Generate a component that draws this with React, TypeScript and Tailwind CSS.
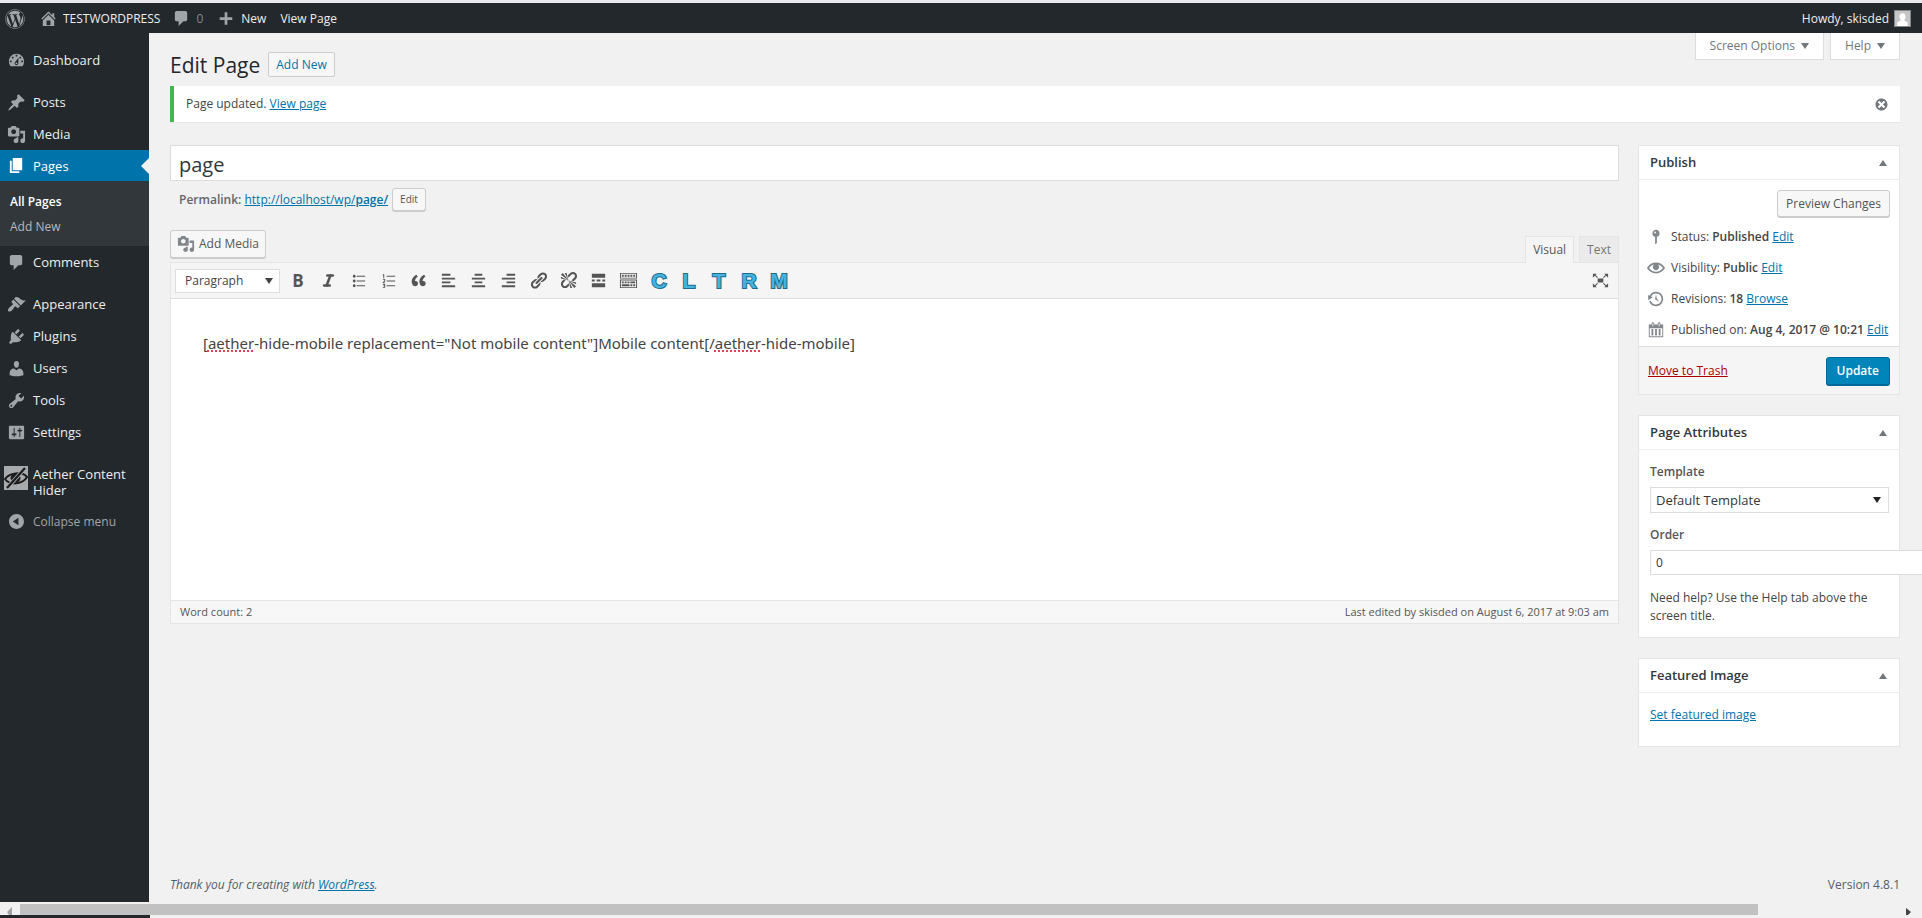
import React from 'react';
import { FaWordpress } from 'react-icons/fa';
import { Italic } from 'lucide-react';

const ICONS = {
  dashboard: 'M3.76 16h12.48c1.1-1.37 1.76-3.11 1.76-5 0-4.42-3.58-8-8-8s-8 3.58-8 8c0 1.89.66 3.63 1.76 5zM10 4c.55 0 1 .45 1 1s-.45 1-1 1-1-.45-1-1 .45-1 1-1zM6 6c.55 0 1 .45 1 1s-.45 1-1 1-1-.45-1-1 .45-1 1-1zm8 0c.55 0 1 .45 1 1s-.45 1-1 1-1-.45-1-1 .45-1 1-1zm-5.37 5.55L12 7v6c0 1.1-.9 2-2 2s-2-.9-2-2c0-.57.24-1.08.63-1.45zM4 10c.55 0 1 .45 1 1s-.45 1-1 1-1-.45-1-1 .45-1 1-1zm12 0c.55 0 1 .45 1 1s-.45 1-1 1-1-.45-1-1 .45-1 1-1zm-5 3c0-.55-.45-1-1-1s-1 .45-1 1 .45 1 1 1 1-.45 1-1z',
  pin: 'M10.44 3.02l1.82-1.82 6.36 6.35-1.83 1.82c-1.05-.68-2.48-.57-3.41.36l-.75.75c-.92.93-1.04 2.35-.35 3.41l-1.83 1.82-2.41-2.41-2.8 2.79c-.42.42-3.38 2.71-3.8 2.29s1.86-3.39 2.28-3.81l2.79-2.79L4.1 9.36l1.83-1.82c1.05.69 2.48.57 3.4-.36l.75-.75c.93-.92 1.05-2.35.36-3.41z',
  media: 'M13 11V4c0-.55-.45-1-1-1h-1.67L9 1H5L3.67 3H2c-.55 0-1 .45-1 1v7c0 .55.45 1 1 1h10c.55 0 1-.45 1-1zM7 4.5c1.38 0 2.5 1.12 2.5 2.5S8.38 9.5 7 9.5 4.5 8.38 4.5 7 5.62 4.5 7 4.5zM14 6h5v10.5c0 1.38-1.12 2.5-2.5 2.5S14 17.88 14 16.5s1.12-2.5 2.5-2.5c.17 0 .34.02.5.05V9h-3V6zm-4 8.05V13h2v3.5c0 1.38-1.12 2.5-2.5 2.5S7 17.88 7 16.5 8.12 14 9.5 14c.17 0 .34.02.5.05z',
  page: 'M6 15V2h10v13H6zm-1 1h8v2H3V5h2v11z',
  comment: 'M5 2h9c1.1 0 2 .9 2 2v7c0 1.1-.9 2-2 2h-2l-5 5v-5H5c-1.1 0-2-.9-2-2V4c0-1.1.9-2 2-2z',
  appearance: 'M14.48 11.06L7.41 3.99l1.5-1.5c.5-.56 2.3-.47 3.51.32 1.21.8 1.43 1.28 2.91 2.1 1.18.64 2.45 1.26 4.45.85zm-.71.71L6.7 4.7 4.93 6.47c-.39.39-.39 1.02 0 1.41l1.06 1.06c.39.39.39 1.03 0 1.42-.6.6-1.43 1.11-2.21 1.69-.35.26-.7.53-1.01.84C1.43 14.23.4 16.08 1.4 17.07c.99 1 2.84-.03 4.18-1.36.31-.31.58-.66.85-1.02.57-.78 1.08-1.61 1.69-2.21.39-.39 1.02-.39 1.41 0l1.06 1.06c.39.39 1.02.39 1.41 0z',
  plugins: 'M13.11 4.36L9.87 7.6 8 5.73l3.24-3.24c.35-.34 1.05-.2 1.56.32.52.51.66 1.21.31 1.55zm-8 1.77l.91-1.12 9.01 9.01-1.19.84c-.71.71-2.63 1.16-3.82 1.16H6.14L4.9 17.26c-.59.59-1.54.59-2.12 0-.59-.58-.59-1.53 0-2.12l1.24-1.24v-3.88c0-1.13.4-3.19 1.09-3.89zm7.26 3.97l3.24-3.24c.34-.35 1.04-.21 1.55.31.52.51.66 1.21.31 1.55l-3.24 3.25z',
  users: 'M10 9.25c-2.27 0-2.73-3.44-2.73-3.44C7 4.02 7.82 2 9.97 2c2.16 0 2.98 2.02 2.71 3.81 0 0-.41 3.44-2.68 3.44zm0 2.57L12.72 10c2.39 0 4.52 2.33 4.52 4.53v2.49s-3.65 1.13-7.24 1.13c-3.65 0-7.24-1.13-7.24-1.13v-2.49c0-2.25 1.94-4.48 4.47-4.48z',
  tools: 'M16.68 9.77c-1.34 1.34-3.3 1.67-4.95.99l-5.41 6.52c-.99.99-2.59.99-3.58 0s-.99-2.59 0-3.57l6.52-5.42c-.68-1.65-.35-3.61.99-4.95 1.28-1.28 3.12-1.62 4.72-1.06l-2.89 2.89 2.82 2.82 2.86-2.87c.53 1.58.18 3.39-1.08 4.65zM3.81 16.21c.4.39 1.04.39 1.43 0 .4-.4.4-1.04 0-1.43-.39-.4-1.03-.4-1.43 0-.39.39-.39 1.03 0 1.43z',
  settings: 'M18 16V4c0-.55-.45-1-1-1H3c-.55 0-1 .45-1 1v12c0 .55.45 1 1 1h14c.55 0 1-.45 1-1zM8 11h1c.55 0 1 .45 1 1s-.45 1-1 1H8v1.5c0 .28-.22.5-.5.5s-.5-.22-.5-.5V13H6c-.55 0-1-.45-1-1s.45-1 1-1h1V5.5c0-.28.22-.5.5-.5s.5.22.5.5V11zm5-2h-1c-.55 0-1-.45-1-1s.45-1 1-1h1V5.5c0-.28.22-.5.5-.5s.5.22.5.5V7h1c.55 0 1 .45 1 1s-.45 1-1 1h-1v5.5c0 .28-.22.5-.5.5s-.5-.22-.5-.5V9z',
  collapse: 'M10 2.16c4.33 0 7.84 3.51 7.84 7.84s-3.51 7.84-7.84 7.84S2.16 14.33 2.16 10 5.71 2.16 10 2.16zm2 11.72V6.12L6.18 9.97z',
  home: 'M16 8.5l1.53 1.53-1.06 1.06L10 4.6l-6.47 6.49-1.06-1.06L10 2.5l4 4v-2h2v4zm-6-2.46l6 5.99V18H4v-5.97zM12 17v-5H8v5h4z',
  plus: 'M17 8v3h-5.500v5.500h-3V11H3V8h5.500V2.500h3V8H17z',
  dismiss: 'M10 2c4.42 0 8 3.58 8 8s-3.58 8-8 8-8-3.58-8-8 3.58-8 8-8zm5 11l-3-3 3-3-2-2-3 3-3-3-2 2 3 3-3 3 2 2 3-3 3 3 2-2z',
  status: 'M14 6c0 1.86-1.28 3.41-3 3.86V16c0 1-2 2-2 2V9.86c-1.72-.45-3-2-3-3.86 0-2.21 1.79-4 4-4s4 1.79 4 4zM8 5c0 .55.45 1 1 1s1-.45 1-1-.45-1-1-1-1 .45-1 1z',
  visibility: 'M19.7 9.4C17.7 6 14 3.9 10 3.9S2.3 6 .3 9.4L0 10l.3.6c2 3.4 5.7 5.5 9.7 5.5s7.7-2.1 9.7-5.5l.3-.6-.3-.6zM10 14.1c-3.1 0-6-1.6-7.7-4.1C3.6 8 5.7 6.6 8 6.1c-.9.6-1.5 1.7-1.5 2.9 0 1.9 1.6 3.5 3.5 3.5s3.5-1.6 3.5-3.5c0-1.2-.6-2.3-1.5-2.9 2.3.5 4.4 1.9 5.7 3.9-1.7 2.5-4.6 4.1-7.7 4.1z',
  backup: 'M13.65 2.88c3.93 2.01 5.48 6.84 3.47 10.77s-6.83 5.48-10.77 3.47c-1.87-.96-3.2-2.56-3.86-4.4l1.64-1.03c.45 1.57 1.52 2.95 3.08 3.76 3.01 1.54 6.69.35 8.23-2.66 1.55-3.01.36-6.69-2.65-8.24C9.78 3.01 6.1 4.2 4.56 7.21l1.88.97-4.95 3.08-.39-5.82 1.78.91C4.9 2.4 9.75.89 13.65 2.88zm-4.36 7.83C9.11 10.53 9 10.28 9 10c0-.07.03-.12.04-.19h-.01L10 5l.97 4.81L14 13l-4.5-2.12.02-.02c-.08-.04-.16-.09-.23-.15z',
  calendar: 'M15 4h3v14H2V4h3V3c0-.83.67-1.5 1.5-1.5S8 2.17 8 3v1h4V3c0-.83.67-1.5 1.5-1.5S15 2.17 15 3v1zM6 3v2.5c0 .28.22.5.5.5s.5-.22.5-.5V3c0-.28-.22-.5-.5-.5S6 2.72 6 3zm7 0v2.5c0 .28.22.5.5.5s.5-.22.5-.5V3c0-.28-.22-.5-.5-.5s-.5.22-.5.5zm4 14V8H3v9h14zM7 16V9H5v7h2zm4 0V9H9v7h2zm4 0V9h-2v7h2z',
  ul: 'M5.5 7C4.67 7 4 6.33 4 5.5 4 4.68 4.67 4 5.5 4 6.32 4 7 4.68 7 5.5 7 6.33 6.32 7 5.5 7zM8 5h9v1H8V5zm-2.5 7c-.83 0-1.5-.67-1.5-1.5C4 9.68 4.67 9 5.5 9c.82 0 1.5.68 1.5 1.5 0 .83-.68 1.5-1.5 1.5zM8 10h9v1H8v-1zm-2.5 7c-.83 0-1.5-.67-1.5-1.5 0-.82.67-1.5 1.5-1.5.82 0 1.5.68 1.5 1.5 0 .83-.68 1.5-1.5 1.5zM8 15h9v1H8v-1z',
  ol: 'M8 5h9v1H8zM8 10h9v1H8zM8 15h9v1H8zM4 3.5h1.5V7.500h-1V4.500H4zM4 8.500h2.500v2.200L5 12h1.500v.8H4v-1L5.500 10.300v-1H4zM4 13.700h2.500v4H4v-.8h1.500v-.8H4.500v-.8h1v-.8H4z',
  quote: 'M9.49 13.22c0-.74-.2-1.38-.61-1.9-.62-.78-1.83-.88-2.53-.72-.29-1.65 1.11-3.75 2.92-4.65L7.88 4c-2.73 1.3-5.42 4.28-4.96 8.05C3.21 14.43 4.59 16 6.54 16c.85 0 1.56-.25 2.12-.75s.83-1.18.83-2.03zm8.05 0c0-.74-.2-1.38-.61-1.9-.63-.78-1.83-.88-2.53-.72-.29-1.65 1.11-3.75 2.92-4.65L15.93 4c-2.73 1.3-5.41 4.28-4.95 8.05.29 2.38 1.66 3.95 3.61 3.95.85 0 1.56-.25 2.12-.75s.83-1.18.83-2.03z',
  alignLeft: 'M12 5V3H3v2h9zm5 4V7H3v2h14zm-5 4v-2H3v2h9zm5 4v-2H3v2h14z',
  alignCenter: 'M14 5V3H6v2h8zm3 4V7H3v2h14zm-3 4v-2H6v2h8zm3 4v-2H3v2h14z',
  alignRight: 'M17 5V3H8v2h9zm0 4V7H3v2h14zm0 4v-2H8v2h9zm0 4v-2H3v2h14z',
  link: 'M17.74 2.76c1.68 1.69 1.68 4.41 0 6.1l-1.53 1.52c-1.12 1.12-2.7 1.47-4.14 1.09l2.62-2.61.76-.77.76-.76c.84-.84.84-2.2 0-3.04-.84-.85-2.2-.85-3.04 0l-.77.76-3.38 3.38c-.37-1.44-.02-3.02 1.1-4.14l1.52-1.53c1.69-1.68 4.42-1.68 6.1 0zM8.59 13.43l5.34-5.34c.42-.42.42-1.1 0-1.52-.44-.43-1.13-.39-1.53 0l-5.33 5.34c-.42.42-.42 1.1 0 1.52.44.43 1.13.39 1.52 0zm-.76 2.29l4.14-4.15c.38 1.44.03 3.02-1.09 4.14l-1.52 1.53c-1.69 1.68-4.41 1.68-6.1 0-1.68-1.68-1.68-4.42 0-6.1l1.53-1.52c1.12-1.12 2.7-1.47 4.14-1.1l-4.14 4.15c-.85.84-.85 2.2 0 3.05.84.84 2.2.84 3.04 0z',
  unlink: 'M17.74 2.26c1.68 1.69 1.68 4.41 0 6.1l-1.53 1.52c-.32.33-.69.58-1.08.77L13 10l1.69-1.64.76-.77.76-.76c.84-.84.84-2.2 0-3.04-.84-.85-2.2-.85-3.04 0l-.77.76-.76.76L10 7l-.65-2.14c.19-.38.44-.75.77-1.07l1.52-1.53c1.69-1.68 4.42-1.68 6.1 0zM2 4l8 6-6-8zm4-2l4 8-2-8H6zM2 6l8 4-8-2V6zm7.36 7.69L10 13l.74 2.35-1.38 1.39c-1.69 1.68-4.41 1.68-6.1 0-1.68-1.68-1.68-4.42 0-6.1l1.39-1.38L7 10l-.69.64-1.52 1.53c-.85.84-.85 2.2 0 3.04.84.85 2.2.85 3.04 0zM18 16l-8-6 6 8zm-4 2l-4-8 2 8h2zm4-4l-8-4 8 2v2z',
  more: 'M17 7V3H3v4h14zM6 11V9H3v2h3zm6 0V9H8v2h4zm5 0V9h-3v2h3zm0 6v-4H3v4h14z',
  kitchenSink: 'M19 2v6H1V2h18zm-1 5V3H2v4h16zM5 4v2H3V4h2zm3 0v2H6V4h2zm3 0v2H9V4h2zm3 0v2h-2V4h2zm3 0v2h-2V4h2zm2 5v9H1V9h18zm-1 8v-7H2v7h16zM5 11v2H3v-2h2zm3 0v2H6v-2h2zm3 0v2H9v-2h2zm6 0v2h-5v-2h5zm-6 3v2H3v-2h8zm3 0v2h-2v-2h2zm3 0v2h-2v-2h2z',
  fullscreen: 'M7 8h6v4H7zM2 3h4L4.800 4.200 7.300 6.500l-.8.8L4 5 2 7zM18 3h-4l1.200 1.200-2.500 2.300.8.8L16 5l2 2zM2 17h4l-1.200-1.200 2.500-2.300-.8-.8L4 15l-2-2zM18 17h-4l1.200-1.200-2.500-2.300.8-.8L16 15l2-2z',
};

type IconName = keyof typeof ICONS;

function Icon({ name, className = 'size-[19px]' }: { name: IconName; className?: string }) {
  return (
    <svg viewBox="0 0 20 20" fill="currentColor" fillRule="evenodd" aria-hidden="true" className={`shrink-0 ${className}`}>
      <path d={ICONS[name]} />
    </svg>
  );
}

const LINK = 'text-[#0073aa] underline';
const BUTTON = 'rounded-[3px] border border-[#ccc] bg-[#f7f7f7] text-[#555] shadow-[0_1px_0_#ccc]';
const MISSPELLED = 'underline decoration-[#e0405a] decoration-dotted decoration-2 underline-offset-1';

function Caret({ up = false }: { up?: boolean }) {
  return (
    <svg viewBox="0 0 8 6" className="w-2 h-1.5 shrink-0" fill="currentColor" aria-hidden="true">
      <path d={up ? 'M4 0l4 6H0z' : 'M0 0h8L4 6z'} />
    </svg>
  );
}

function MenuItem({ icon, label }: { icon: IconName; label: string }) {
  return (
    <a href="#" className="flex h-8 items-center gap-[7px] pl-[7px] text-[#eee]">
      <Icon name={icon} className="size-[19px] text-[#a0a5aa]" />
      <span>{label}</span>
    </a>
  );
}

function AdminBar() {
  return (
    <header className="flex h-[30px] items-center justify-between bg-[#23282d] pt-px text-[12px] text-[#eee]">
      <nav className="flex items-center">
        <a href="#" aria-label="About WordPress" className="ml-[5px] text-[#a0a5aa]">
          <FaWordpress className="size-5" />
        </a>
        <a href="#" className="ml-3.5 flex items-center gap-[5px]">
          <Icon name="home" className="size-[19px] text-[#a0a5aa]" />
          TESTWORDPRESS
        </a>
        <a href="#" className="ml-3 flex items-center gap-[5px] text-[#82878c]">
          <Icon name="comment" className="size-[19px] text-[#a0a5aa]" />
          0
        </a>
        <a href="#" className="ml-3.5 flex items-center gap-1.5">
          <Icon name="plus" className="size-[18px] text-[#a0a5aa]" />
          New
        </a>
        <a href="#" className="ml-3.5">View Page</a>
      </nav>
      <a href="#" className="mr-[11px] flex items-center gap-[5px]">
        Howdy, skisded
        <svg viewBox="0 0 17 17" className="size-[17px] border border-[#82878c]" aria-hidden="true">
          <path fill="#c5c5c5" d="M0 0h17v17H0z" />
          <path fill="#fff" d="M8.500 2.500c2 0 3.500 1.500 3.500 3.800 0 1.600-.6 2.800-1.500 3.600v1l4 2.100V17h-12v-4l4-2.100v-1C5.600 9.100 5 7.900 5 6.300c0-2.300 1.500-3.800 3.500-3.800z" />
        </svg>
      </a>
    </header>
  );
}

function Sidebar() {
  return (
    <nav className="w-[149px] shrink-0 bg-[#23282d] pt-[11px] text-[13px] leading-4">
      <MenuItem icon="dashboard" label="Dashboard" />
      <div className="h-2.5" />
      <MenuItem icon="pin" label="Posts" />
      <MenuItem icon="media" label="Media" />
      <a href="#" className="relative flex h-[31px] items-center gap-[7px] bg-[#0073aa] pl-[7px] text-white">
        <Icon name="page" />
        <span>Pages</span>
        <span className="absolute right-0 top-2 border-y-8 border-r-8 border-y-transparent border-r-[#f1f1f1]" />
      </a>
      <div className="flex h-[65px] flex-col gap-[9px] bg-[#32373c] py-[13px] pl-2.5 text-[12px]">
        <a href="#" className="font-semibold text-white">All Pages</a>
        <a href="#" className="text-[#b4b9be]">Add New</a>
      </div>
      <MenuItem icon="comment" label="Comments" />
      <div className="h-2.5" />
      <MenuItem icon="appearance" label="Appearance" />
      <MenuItem icon="plugins" label="Plugins" />
      <MenuItem icon="users" label="Users" />
      <MenuItem icon="tools" label="Tools" />
      <MenuItem icon="settings" label="Settings" />
      <div className="h-2.5" />
      <a href="#" className="flex gap-[5px] py-2 pl-1 text-[#eee]">
        <svg viewBox="0 0 24 24" className="size-6 shrink-0" fill="none" stroke="#1b1b1b" aria-hidden="true">
          <path fill="#a7abae" stroke="none" d="M0 0h24v24H0z" />
          <path strokeWidth="2" d="M1 13c4-6 17-8 22-2-4 7-17 9-22 2z" />
          <path fill="#1b1b1b" d="M7 12c0-5 9-6 9 0s-9 5-9 0z" />
          <path stroke="#a7abae" strokeWidth="4" d="M4 21L21 2" />
          <path strokeWidth="2.200" d="M3 22L21 2" />
        </svg>
        <span>Aether Content<br />Hider</span>
      </a>
      <button type="button" className="flex h-[31px] items-center gap-[7px] pl-[7px] text-[12px] text-[#a0a5aa]">
        <Icon name="collapse" className="size-[19px]" />
        Collapse menu
      </button>
    </nav>
  );
}

const TOOLS: { icon: IconName; label: string }[] = [
  { icon: 'ul', label: 'Bulleted list' },
  { icon: 'ol', label: 'Numbered list' },
  { icon: 'quote', label: 'Blockquote' },
  { icon: 'alignLeft', label: 'Align left' },
  { icon: 'alignCenter', label: 'Align center' },
  { icon: 'alignRight', label: 'Align right' },
  { icon: 'link', label: 'Insert link' },
  { icon: 'unlink', label: 'Remove link' },
  { icon: 'more', label: 'Read more' },
  { icon: 'kitchenSink', label: 'Toolbar toggle' },
];

function Editor() {
  return (
    <div>
      <div className="flex items-end justify-between">
        <button type="button" className={`mb-1 flex h-7 items-center gap-1 px-1.5 text-[12px] ${BUTTON}`}>
          <Icon name="media" className="size-[18px] text-[#82878c]" />
          Add Media
        </button>
        <div className="flex gap-[5px] text-[12px] text-[#555]">
          <button type="button" className="relative z-10 -mb-px h-[27px] border border-b-0 border-[#e5e5e5] bg-[#f5f5f5] px-[7px]">Visual</button>
          <button type="button" className="h-[26px] border border-b-0 border-[#e5e5e5] bg-[#ebebeb] px-[7px] text-[#777]">Text</button>
        </div>
      </div>
      <div className="border border-[#e5e5e5] bg-white">
        <div className="flex h-9 items-center border-b border-[#ddd] bg-[#f5f5f5] pl-1 pr-2 text-[#555]">
          <button type="button" className="mr-[3px] flex h-6 w-[105px] items-center justify-between border border-[#ddd] bg-white pl-[9px] pr-1.5 text-[12px] text-[#444]">
            Paragraph
            <Caret />
          </button>
          <button type="button" aria-label="Bold" className="flex w-[30px] justify-center text-[17px] leading-5 font-bold">B</button>
          <button type="button" aria-label="Italic" className="flex w-[30px] justify-center">
            <Italic size={15} strokeWidth={4} />
          </button>
          {TOOLS.map((tool) => (
            <button key={tool.icon} type="button" aria-label={tool.label} className="flex w-[30px] justify-center">
              <Icon name={tool.icon} />
            </button>
          ))}
          <div className="ml-px flex">
            {['C', 'L', 'T', 'R', 'M'].map((letter) => (
              <button
                key={letter}
                type="button"
                className="w-[30px] text-center font-['Liberation_Sans',sans-serif] text-[21px] leading-6 font-bold text-[#45b3de] [-webkit-text-stroke:2px_#1d6c8d] [paint-order:stroke]"
              >
                {letter}
              </button>
            ))}
          </div>
          <button type="button" aria-label="Distraction-free writing mode" className="ml-auto">
            <Icon name="fullscreen" />
          </button>
        </div>
        <div className="h-[301px] px-8 pt-8 font-['Noto_Sans',sans-serif] text-[15px] leading-6 text-[#444]">
          <p>
            [<span className={MISSPELLED}>aether</span>-hide-mobile replacement="Not mobile content"]Mobile content[/
            <span className={MISSPELLED}>aether</span>-hide-mobile]
          </p>
        </div>
        <div className="flex h-[23px] items-center justify-between border-t border-[#e5e5e5] bg-[#f7f7f7] px-[9px] text-[11px] text-[#555]">
          <span>Word count: 2</span>
          <span>Last edited by skisded on August 6, 2017 at 9:03 am</span>
        </div>
      </div>
    </div>
  );
}

function Panel({ title, children }: { title: string; children: React.ReactNode }) {
  return (
    <section className="border border-[#e5e5e5] bg-white">
      <div className="flex h-[34px] items-center justify-between border-b border-[#eee] pl-[11px] pr-3">
        <h2 className="text-[13px] font-semibold text-[#32373c]">{title}</h2>
        <button type="button" aria-label={`Toggle panel: ${title}`} className="text-[#72777c]">
          <Caret up />
        </button>
      </div>
      {children}
    </section>
  );
}

interface PublishRow {
  icon: IconName;
  label: string;
  value: string;
  action: string;
}

const PUBLISH_ROWS: PublishRow[] = [
  { icon: 'status', label: 'Status:', value: 'Published', action: 'Edit' },
  { icon: 'visibility', label: 'Visibility:', value: 'Public', action: 'Edit' },
  { icon: 'backup', label: 'Revisions:', value: '18', action: 'Browse' },
  { icon: 'calendar', label: 'Published on:', value: 'Aug 4, 2017 @ 10:21', action: 'Edit' },
];

function RightColumn() {
  return (
    <aside className="flex w-[262px] shrink-0 flex-col gap-5 text-[12px] text-[#444]">
      <Panel title="Publish">
        <div className="flex justify-end px-[9px] pt-2.5">
          <button type="button" className={`h-[27px] px-2 ${BUTTON}`}>Preview Changes</button>
        </div>
        <ul className="pb-px pt-1">
          {PUBLISH_ROWS.map((row) => (
            <li key={row.label} className="flex h-[31px] items-center gap-1.5 whitespace-nowrap pl-2">
              <Icon name={row.icon} className="size-[18px] text-[#82878c]" />
              <span>
                {row.label} <b className="font-semibold">{row.value}</b> <a href="#" className={LINK}>{row.action}</a>
              </span>
            </li>
          ))}
        </ul>
        <div className="flex h-12 items-center justify-between border-t border-[#ddd] bg-[#f5f5f5] px-[9px]">
          <a href="#" className="text-[#a00] underline">Move to Trash</a>
          <button type="button" className="h-7 rounded-[3px] border border-[#006799] bg-[#0085ba] px-2.5 font-semibold text-white shadow-[0_1px_0_#006799]">
            Update
          </button>
        </div>
      </Panel>

      <Panel title="Page Attributes">
        <div className="flex flex-col pb-3 pl-[11px] pr-2.5 pt-[13px] leading-[18px]">
          <label htmlFor="template" className="font-semibold text-[#555]">Template</label>
          <div className="relative mt-1.5">
            <select id="template" className="h-[26px] w-full appearance-none border border-[#ddd] bg-white px-[5px] text-[13px] text-[#32373c]">
              <option>Default Template</option>
            </select>
            <span className="pointer-events-none absolute right-2 top-2.5 text-[#222]">
              <Caret />
            </span>
          </div>
          <label htmlFor="order" className="mt-[13px] font-semibold text-[#555]">Order</label>
          <input id="order" type="text" defaultValue="0" className="mt-1.5 h-[25px] w-[300px] border border-[#ddd] bg-white px-[5px] text-[12px] text-[#32373c]" />
          <p className="mt-3.5">Need help? Use the Help tab above the screen title.</p>
        </div>
      </Panel>

      <Panel title="Featured Image">
        <div className="pb-[22px] pl-[11px] pt-[13px] leading-[18px]">
          <a href="#" className={LINK}>Set featured image</a>
        </div>
      </Panel>
    </aside>
  );
}

function Scrollbar() {
  return (
    <div className="bg-[#f1f1f1]">
      <div className="flex h-[13px] items-center pt-0.5">
        <svg viewBox="0 0 20 11" className="h-[11px] w-5 shrink-0 text-[#a3a3a3]" fill="currentColor" aria-hidden="true">
          <path d="M12 3v8H9L7 8z" />
        </svg>
        <div className="h-[11px] flex-1 bg-[#c1c1c1]" />
        <svg viewBox="0 0 20 11" className="ml-36 h-[11px] w-5 shrink-0 text-[#444]" fill="currentColor" aria-hidden="true">
          <path d="M4 4l5 4-3 3H4z" />
        </svg>
      </div>
      <div className="h-[3px] w-[150px] bg-[#23282d]" />
    </div>
  );
}

export default function App() {
  return (
    <div className="flex min-h-screen flex-col overflow-hidden bg-[#f1f1f1] font-['Open_Sans','Noto_Sans',sans-serif] text-[12px]">
      <div className="h-[3px] bg-[#e6e8ee]" />
      <AdminBar />
      <div className="flex flex-1">
        <Sidebar />
        <main className="flex min-w-0 flex-1 flex-col pl-[21px] pr-[22px]">
          <div className="flex h-[53px] justify-between">
            <div className="flex items-center gap-2 pt-2.5">
              <h1 className="text-[21px] leading-8 text-[#23282d]">Edit Page</h1>
              <a href="#" className="flex h-[25px] items-center rounded-[2px] border border-[#ccc] bg-[#f7f7f7] px-[7px] text-[12px] text-[#0073aa]">Add New</a>
            </div>
            <div className="flex gap-1.5 text-[12px] text-[#72777c]">
              <button type="button" className="flex h-[27px] items-center gap-1.5 border border-t-0 border-[#ddd] bg-white px-3.5">Screen Options <Caret /></button>
              <button type="button" className="flex h-[27px] items-center gap-1.5 border border-t-0 border-[#ddd] bg-white px-3.5">Help <Caret /></button>
            </div>
          </div>

          <div className="flex h-9 items-center justify-between border-l-4 border-[#46b450] bg-white pl-3 pr-[11px] text-[#444] shadow-[0_1px_1px_rgba(0,0,0,0.04)]">
            <p>Page updated. <a href="#" className={LINK}>View page</a></p>
            <button type="button" aria-label="Dismiss this notice" className="text-[#72777c]">
              <Icon name="dismiss" className="size-[15px]" />
            </button>
          </div>

          <div className="mt-[23px] flex gap-[19px]">
            <div className="min-w-0 flex-1">
              <input type="text" aria-label="Page title" defaultValue="page" className="block h-9 w-full border border-[#ddd] bg-white px-2 pt-0.5 text-[20px] text-[#32373c]" />
              <div className="flex h-[49px] items-start gap-1 pl-[9px] pt-[7px] text-[#666]">
                <p className="leading-6">
                  <b className="font-semibold">Permalink:</b>{' '}
                  <a href="#" className={LINK}>http://localhost/wp/<b className="font-semibold">page/</b></a>
                </p>
                <button type="button" className={`h-[23px] px-[7px] text-[10px] ${BUTTON}`}>Edit</button>
              </div>
              <Editor />
            </div>
            <RightColumn />
          </div>

          <footer className="mt-auto flex justify-between pb-2 text-[12px] leading-[18px] text-[#555d66]">
            <p className="italic">Thank you for creating with <a href="#" className={LINK}>WordPress</a>.</p>
            <p>Version 4.8.1</p>
          </footer>
        </main>
      </div>
      <Scrollbar />
    </div>
  );
}
